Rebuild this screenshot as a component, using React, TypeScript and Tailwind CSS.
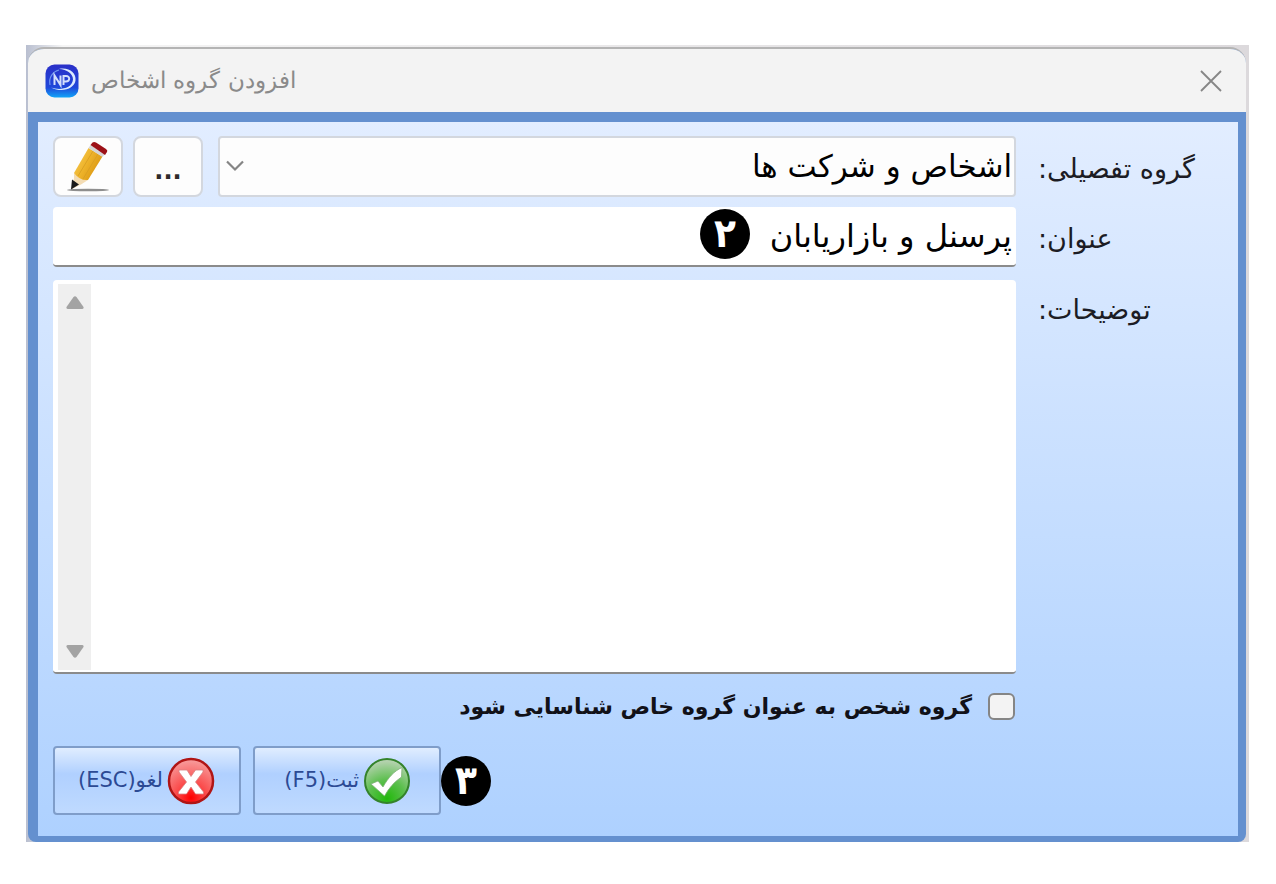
import { useState } from "react";

const GROUPS = ["اشخاص و شرکت ها"];

function AppLogo() {
  return (
    <svg viewBox="0 0 34 34" className="h-[34px] w-[34px] shrink-0">
      <defs>
        <linearGradient id="logo" x1="0" y1="0" x2="0" y2="1">
          <stop offset="0" stopColor="#2a2fc8" />
          <stop offset="0.7" stopColor="#1f48da" />
          <stop offset="1" stopColor="#10a5f8" />
        </linearGradient>
      </defs>
      <rect x="0.5" y="0.5" width="33" height="33" rx="9" fill="url(#logo)" />
      <path
        d="M14 5C24 3 31.500 9 30.500 16.500C29.500 24 18 29.500 6 23.500C14 26.500 27 25 28 15.500C28 9.500 22 5.500 14 5Z"
        fill="#dbe9ff"
      />
      <path
        d="M5 21C3.500 13 8 7.500 14 6"
        fill="none"
        stroke="#6f95ee"
        strokeWidth="1.200"
      />
      <path
        d="M9.500 21V11.500L15.500 21V11.500M18.500 21V12H21C25.500 12 25 17.500 21 17.500H19"
        fill="none"
        stroke="#d3defc"
        strokeWidth="2"
      />
    </svg>
  );
}

function PencilIcon() {
  return (
    <svg viewBox="0 0 48 52" className="h-[52px] w-12 shrink-0">
      <defs>
        <linearGradient id="wood" x1="0" y1="0" x2="1" y2="0.6">
          <stop offset="0" stopColor="#f7cf62" />
          <stop offset="0.5" stopColor="#efb52c" />
          <stop offset="1" stopColor="#d9940f" />
        </linearGradient>
      </defs>
      <ellipse cx="24" cy="49" rx="21" ry="1.300" fill="#8e8e8e" />
      <path d="M10 37L10 32L24 39L17 43.500L8 48Z" fill="#f3dcb4" />
      <path d="M8 38.500L15 43.500L7 48.500Z" fill="#1a1a1a" />
      <path d="M10 32L24.500 7L38.500 15.500L24 39Q16 40 10 32Z" fill="url(#wood)" />
      <path
        d="M14 35L29 10M19 38L34 13"
        stroke="#d99f22"
        strokeWidth="0.900"
        fill="none"
      />
      <path d="M24.500 7L26.500 4L41 13L38.500 16Z" fill="#d5d5d5" />
      <path
        d="M26.500 4L28.500 1.500Q30 0.500 32 1.500L42 8Q44 9.500 43 11L41 14Z"
        fill="#9c1117"
      />
    </svg>
  );
}

function CancelIcon() {
  return (
    <svg viewBox="0 0 48 50" className="h-[50px] w-12 shrink-0">
      <defs>
        <radialGradient id="red" cx="0.5" cy="0.88" r="0.85">
          <stop offset="0" stopColor="#ff0000" />
          <stop offset="0.4" stopColor="#fb4a4a" />
          <stop offset="1" stopColor="#f79a9a" />
        </radialGradient>
      </defs>
      <circle cx="24" cy="25" r="22" fill="url(#red)" stroke="#b01515" strokeWidth="2.500" />
      <path
        d="M12 14H20L24 20.500L28.500 14H36V16L28.500 26L36.500 36V38H28.500L24 31L19.500 38H11.500V36L19.500 26L12 16Z"
        fill="#fff"
        stroke="#d98080"
        strokeWidth="0.800"
      />
    </svg>
  );
}

function AcceptIcon() {
  return (
    <svg viewBox="0 0 48 50" className="h-[50px] w-12 shrink-0">
      <defs>
        <radialGradient id="green" cx="0.5" cy="0.9" r="0.85">
          <stop offset="0" stopColor="#22b80c" />
          <stop offset="0.5" stopColor="#5cbf4e" />
          <stop offset="1" stopColor="#b4d2ae" />
        </radialGradient>
      </defs>
      <circle cx="24" cy="25" r="22" fill="url(#green)" stroke="#34832b" strokeWidth="2" />
      <path
        d="M8 28L15 25L20 31C25 22 31 15 39 11.500L38.500 21C31 26 26 32 21.500 40Z"
        fill="#fff"
        stroke="#7fae78"
        strokeWidth="0.800"
      />
    </svg>
  );
}

function StepBadge({ children }: { children: string }) {
  return (
    <span className="flex h-[50px] w-[50px] shrink-0 items-center justify-center rounded-full bg-black pb-0.5 font-['DejaVu_Sans_Condensed','DejaVu_Sans',sans-serif] text-[40px] leading-none font-bold text-white">
      {children}
    </span>
  );
}

const LABEL = "w-[222px] shrink-0 pt-1 pl-[22px] text-left text-[27px] leading-8 text-[#1c1c24]";
const TOOL =
  "flex h-[61px] w-[70px] shrink-0 items-center justify-center rounded-lg border-2 border-[#d3d7de] bg-[#fdfdfd]";
const ACTION =
  "flex h-[69px] w-[188px] items-center justify-end gap-1 rounded border-2 border-[#7f9dc9] bg-linear-to-b from-[#e0edff] from-0% via-[#b0d0ff] via-40% to-[#bfdaff] text-[21px] text-[#2c4a94]";

export default function App() {
  const [group, setGroup] = useState(GROUPS[0]);
  const [title, setTitle] = useState("پرسنل و بازاریابان");
  const [notes, setNotes] = useState("");
  const [special, setSpecial] = useState(false);

  return (
    <main className="min-h-screen bg-white pt-[45px] pr-[27px] pb-[42px] pl-[26px] font-['DejaVu_Sans',sans-serif]">
      <div className="bg-linear-to-r from-[#b9bfd0] from-0% via-[#f5f5f5] via-3% to-[#dcd9dc] pt-0.5 pr-[3px] pl-0.5">
        <form
          onSubmit={(e) => e.preventDefault()}
          className="overflow-hidden rounded-t-2xl rounded-b-lg border-t-2 border-[#b4b4b4] bg-[#6490cf]"
        >
          <header className="flex h-[63px] items-center bg-[#f3f3f3] pr-6 pl-[17px]">
            <AppLogo />
            <h1 dir="rtl" className="ml-3 text-[23px] font-extralight text-[#8a8a8a]">
              افزودن گروه اشخاص
            </h1>
            <button type="button" aria-label="بستن" className="ml-auto">
              <svg viewBox="0 0 22 22" className="h-[22px] w-[22px]">
                <path d="M1 1L21 21M21 1L1 21" stroke="#868686" strokeWidth="1.800" />
              </svg>
            </button>
          </header>

          <div className="mt-2.5 mr-2 mb-1.5 ml-2.5 bg-linear-to-b from-[#e2edff] to-[#aed1ff] pt-3.5 pb-[21px] pl-[15px]">
            <div className="flex items-center">
              <button type="button" aria-label="ویرایش" className={TOOL}>
                <PencilIcon />
              </button>
              <button
                type="button"
                className={`${TOOL} ml-2.5 pt-2 text-2xl font-bold text-[#2f2a2a]`}
              >
                ...
              </button>
              <div className="relative ml-[15px] flex-1">
                <select
                  id="group"
                  dir="rtl"
                  value={group}
                  onChange={(e) => setGroup(e.target.value)}
                  className="block h-[61px] w-full appearance-none rounded border-2 border-[#d3d7de] bg-[#fdfdfd] pr-0.5 text-[31px] text-black"
                >
                  {GROUPS.map((g) => (
                    <option key={g}>{g}</option>
                  ))}
                </select>
                <svg viewBox="0 0 18 12" className="pointer-events-none absolute top-6 left-2 h-3 w-[18px]">
                  <path d="M1 1.500L9 9.500L17 1.500" fill="none" stroke="#858585" strokeWidth="2.200" />
                </svg>
              </div>
              <label htmlFor="group" dir="rtl" className={LABEL}>
                گروه تفصیلی:
              </label>
            </div>

            <div className="mt-2.5 flex items-center">
              <div className="relative flex-1">
                <input
                  id="title"
                  type="text"
                  dir="rtl"
                  value={title}
                  onChange={(e) => setTitle(e.target.value)}
                  className="block h-[60px] w-full rounded-sm border-b-2 border-[#8b8b8b] bg-white pr-1 text-[32px] text-black outline-none"
                />
                <span className="absolute top-0.5 right-[266px]">
                  <StepBadge>۲</StepBadge>
                </span>
              </div>
              <label htmlFor="title" dir="rtl" className={LABEL}>
                عنوان:
              </label>
            </div>

            <div className="mt-[13px] flex items-start">
              <div className="flex h-[394px] flex-1 rounded-sm border-b-2 border-[#8b8b8b] bg-white">
                <div className="mt-1 mb-0.5 ml-[5px] flex w-[33px] flex-col items-center justify-between bg-[#efefef] py-3">
                  <svg viewBox="0 0 18 13" className="h-[13px] w-[18px]">
                    <path d="M7.500 1Q9 -0.500 10.500 1L17.500 11Q18 13 16 13H2Q0 13 0.500 11Z" fill="#a3a3a3" />
                  </svg>
                  <svg viewBox="0 0 18 13" className="h-[13px] w-[18px]">
                    <path d="M7.500 12Q9 13.500 10.500 12L17.500 2Q18 0 16 0H2Q0 0 0.500 2Z" fill="#a3a3a3" />
                  </svg>
                </div>
                <textarea
                  id="notes"
                  dir="rtl"
                  value={notes}
                  onChange={(e) => setNotes(e.target.value)}
                  className="flex-1 resize-none p-1 text-[32px] text-black outline-none"
                />
              </div>
              <label htmlFor="notes" dir="rtl" className={`${LABEL} mt-2.5`}>
                توضیحات:
              </label>
            </div>

            <div className="mt-4 mr-[223px] flex h-8 items-center justify-end gap-4">
              <label htmlFor="special" dir="rtl" className="text-[22px] font-bold text-[#111118]">
                گروه شخص به عنوان گروه خاص شناسایی شود
              </label>
              <input
                id="special"
                type="checkbox"
                checked={special}
                onChange={(e) => setSpecial(e.target.checked)}
                className="h-[27px] w-[27px] appearance-none rounded-md border-2 border-[#858585] bg-[#f3f3f3] checked:bg-[#2c4a94]"
              />
            </div>

            <div className="mt-6 flex items-center">
              <button type="button" className={`${ACTION} pr-6`}>
                <span dir="rtl">لغو(ESC)</span>
                <CancelIcon />
              </button>
              <button type="submit" className={`${ACTION} ml-3 pr-7`}>
                <span dir="rtl">ثبت(F5)</span>
                <AcceptIcon />
              </button>
              <StepBadge>۳</StepBadge>
            </div>
          </div>
        </form>
      </div>
    </main>
  );
}
